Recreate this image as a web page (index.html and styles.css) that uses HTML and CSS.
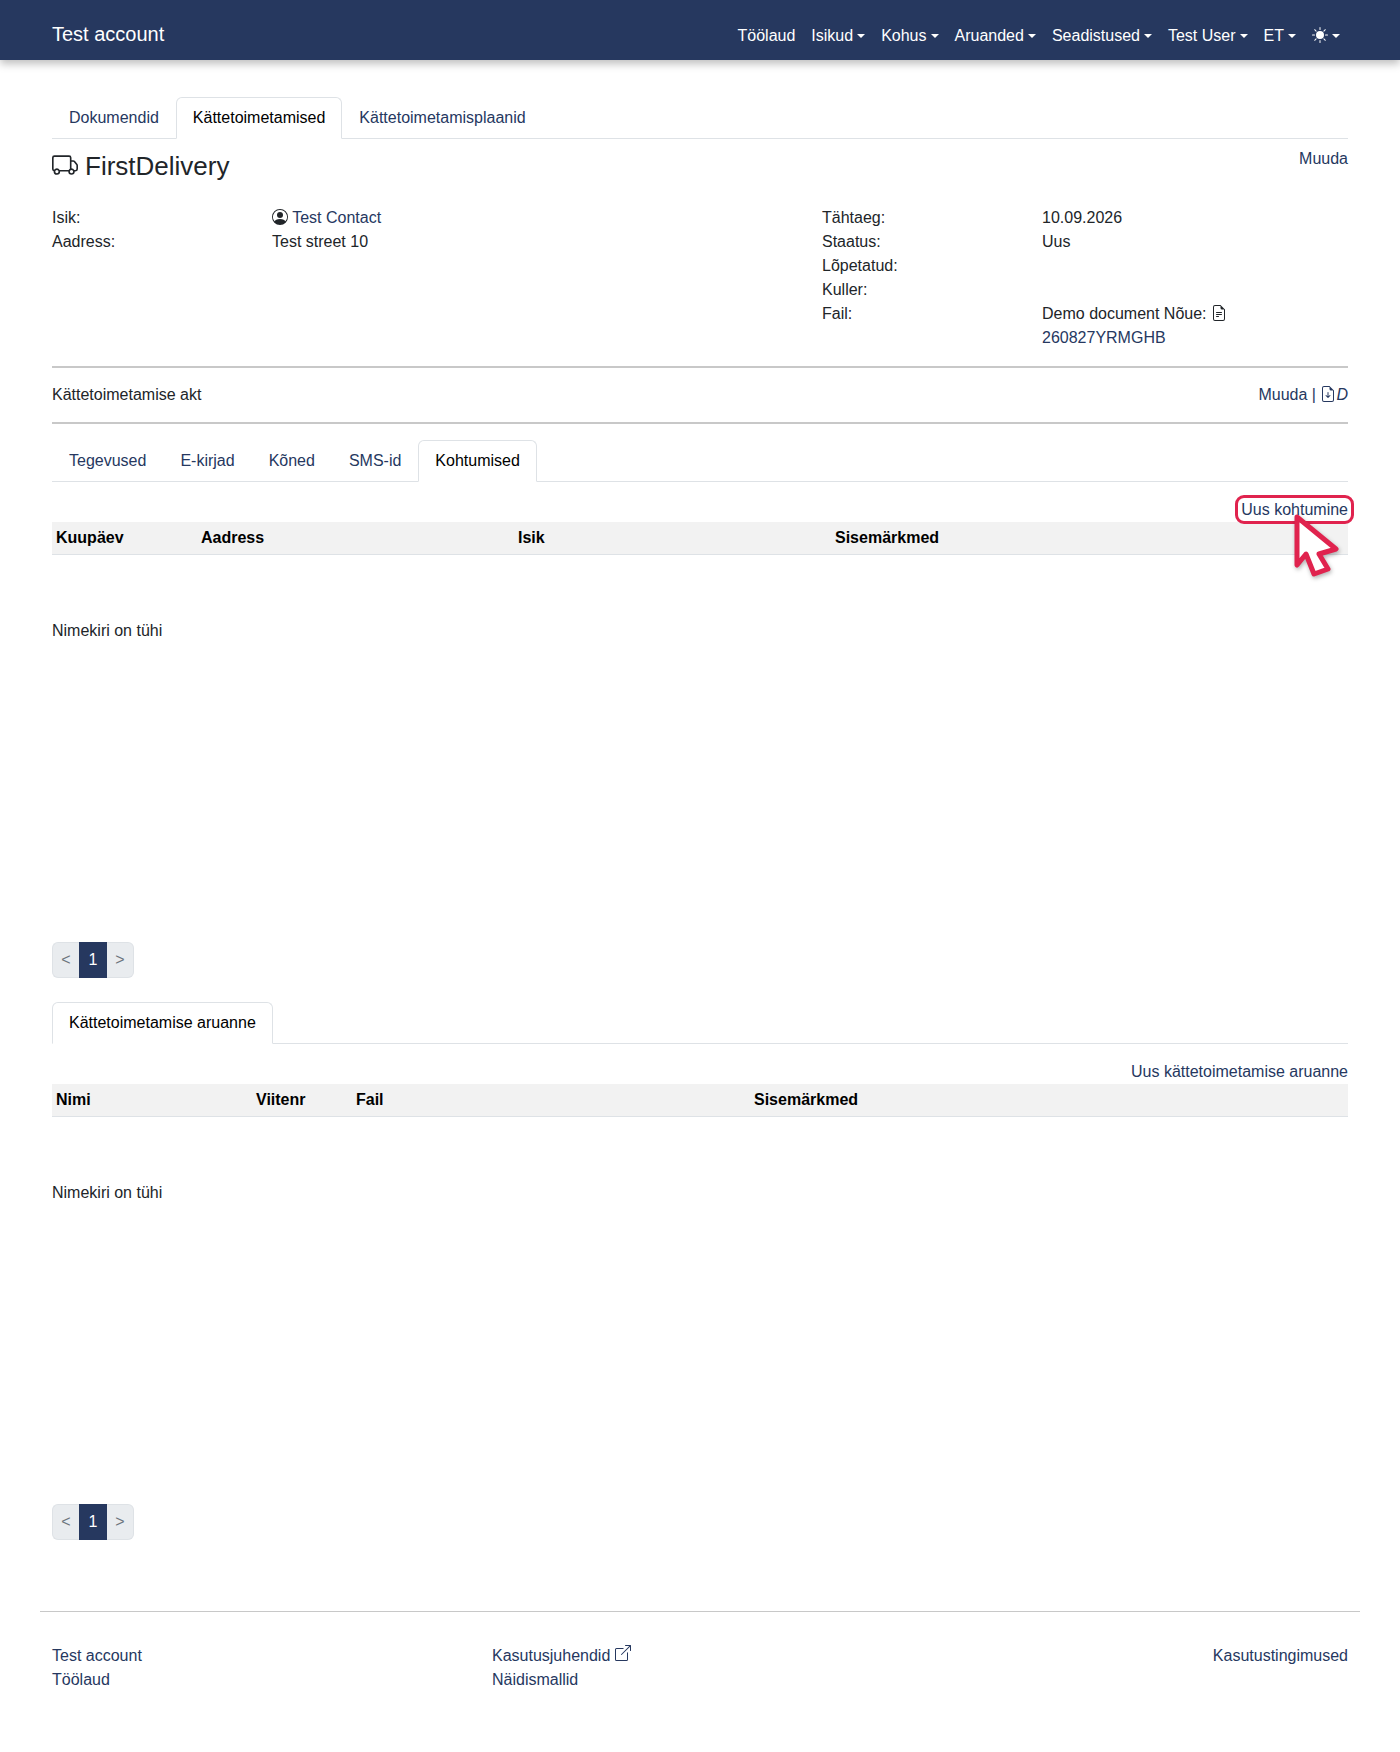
FILE: index.html
```html
<!DOCTYPE html>
<html lang="et">
<head>
    <meta charset="UTF-8">
    <title>FirstDelivery</title>
    <link rel="stylesheet" href="styles.css">
</head>
<body>
    <svg class="defs" width="0" height="0">
        <symbol id="i-truck" viewBox="0 0 16 16"><path d="M0 3.5A1.5 1.5 0 0 1 1.5 2h9A1.5 1.5 0 0 1 12 3.5V5h1.02a1.5 1.5 0 0 1 1.17.563l1.481 1.85a1.5 1.5 0 0 1 .329.938V10.5a1.5 1.5 0 0 1-1.5 1.5H14a2 2 0 1 1-4 0H5a2 2 0 1 1-3.998-.085A1.5 1.5 0 0 1 0 10.5zm1.294 7.456A2 2 0 0 1 4.732 11h5.536a2 2 0 0 1 .732-.732V3.5a.5.5 0 0 0-.5-.5h-9a.5.5 0 0 0-.5.5v7a.5.5 0 0 0 .294.456M12 10a2 2 0 0 1 1.732 1h.768a.5.5 0 0 0 .5-.5V8.35a.5.5 0 0 0-.11-.312l-1.48-1.85A.5.5 0 0 0 13.02 6H12zm-9 1a1 1 0 1 0 0 2 1 1 0 0 0 0-2m9 0a1 1 0 1 0 0 2 1 1 0 0 0 0-2"/></symbol>
        <symbol id="i-person" viewBox="0 0 16 16"><path d="M11 6a3 3 0 1 1-6 0 3 3 0 0 1 6 0"/><path fill-rule="evenodd" d="M0 8a8 8 0 1 1 16 0A8 8 0 0 1 0 8m8-7a7 7 0 0 0-5.468 11.37C3.242 11.226 4.805 10 8 10s4.757 1.225 5.468 2.37A7 7 0 0 0 8 1"/></symbol>
        <symbol id="i-file" viewBox="0 0 16 16"><path d="M5.5 7a.5.5 0 0 0 0 1h5a.5.5 0 0 0 0-1zM5 9.5a.5.5 0 0 1 .5-.5h5a.5.5 0 0 1 0 1h-5a.5.5 0 0 1-.5-.5m0 2a.5.5 0 0 1 .5-.5h2a.5.5 0 0 1 0 1h-2a.5.5 0 0 1-.5-.5"/><path d="M9.5 0H4a2 2 0 0 0-2 2v12a2 2 0 0 0 2 2h8a2 2 0 0 0 2-2V4.5zm0 1v2A1.5 1.5 0 0 0 11 4.5h2V14a1 1 0 0 1-1 1H4a1 1 0 0 1-1-1V2a1 1 0 0 1 1-1z"/></symbol>
        <symbol id="i-file-down" viewBox="0 0 16 16"><path d="M8.5 6.5a.5.5 0 0 0-1 0v3.793L6.354 9.146a.5.5 0 1 0-.708.708l2 2a.5.5 0 0 0 .708 0l2-2a.5.5 0 0 0-.708-.708L8.5 10.293z"/><path d="M14 14V4.5L9.5 0H4a2 2 0 0 0-2 2v12a2 2 0 0 0 2 2h8a2 2 0 0 0 2-2M9.5 3A1.5 1.5 0 0 0 11 4.5h2V14a1 1 0 0 1-1 1H4a1 1 0 0 1-1-1V2a1 1 0 0 1 1-1h5.5z"/></symbol>
        <symbol id="i-external" viewBox="0 0 16 16"><path fill-rule="evenodd" d="M8.636 3.5a.5.5 0 0 0-.5-.5H1.5A1.5 1.5 0 0 0 0 4.5v10A1.5 1.5 0 0 0 1.5 16h10a1.5 1.5 0 0 0 1.5-1.5V7.864a.5.5 0 0 0-1 0V14.5a.5.5 0 0 1-.5.5h-10a.5.5 0 0 1-.5-.5v-10a.5.5 0 0 1 .5-.5h6.636a.5.5 0 0 0 .5-.5"/><path fill-rule="evenodd" d="M16 .5a.5.5 0 0 0-.5-.5h-5a.5.5 0 0 0 0 1h3.793L6.146 9.146a.5.5 0 1 0 .708.708L15 1.707V5.5a.5.5 0 0 0 1 0z"/></symbol>
        <symbol id="i-sun" viewBox="0 0 16 16"><path d="M8 12a4 4 0 1 0 0-8 4 4 0 0 0 0 8M8 0a.5.5 0 0 1 .5.5v2a.5.5 0 0 1-1 0v-2A.5.5 0 0 1 8 0m0 13a.5.5 0 0 1 .5.5v2a.5.5 0 0 1-1 0v-2A.5.5 0 0 1 8 13m8-5a.5.5 0 0 1-.5.5h-2a.5.5 0 0 1 0-1h2a.5.5 0 0 1 .5.5M3 8a.5.5 0 0 1-.5.5h-2a.5.5 0 0 1 0-1h2A.5.5 0 0 1 3 8m10.657-5.657a.5.5 0 0 1 0 .707l-1.414 1.415a.5.5 0 1 1-.707-.708l1.414-1.414a.5.5 0 0 1 .707 0m-9.193 9.193a.5.5 0 0 1 0 .707L3.05 13.657a.5.5 0 0 1-.707-.707l1.414-1.414a.5.5 0 0 1 .707 0m9.193 2.121a.5.5 0 0 1-.707 0l-1.414-1.414a.5.5 0 0 1 .707-.707l1.414 1.414a.5.5 0 0 1 0 .707M4.464 4.465a.5.5 0 0 1-.707 0L2.343 3.05a.5.5 0 1 1 .707-.707l1.414 1.414a.5.5 0 0 1 0 .708"/></symbol>
    </svg>

    <nav class="navbar">
        <a class="brand" href="#">Test account</a>
        <div class="menu">
            <a href="#">Töölaud</a>
            <a class="caret" href="#">Isikud</a>
            <a class="caret" href="#">Kohus</a>
            <a class="caret" href="#">Aruanded</a>
            <a class="caret" href="#">Seadistused</a>
            <a class="caret" href="#">Test User</a>
            <a class="caret" href="#">ET</a>
            <a class="caret" href="#"><svg class="icon sun"><use href="#i-sun"/></svg></a>
        </div>
    </nav>

    <main class="content">
        <div class="tabs">
            <a href="#">Dokumendid</a>
            <a class="active" href="#">Kättetoimetamised</a>
            <a href="#">Kättetoimetamisplaanid</a>
        </div>

        <div class="title-row">
            <h3><svg class="icon truck"><use href="#i-truck"/></svg>FirstDelivery</h3>
            <a href="#">Muuda</a>
        </div>

        <div class="details">
            <div class="details-col">
                <div class="each"><span class="label">Isik:</span><span><svg class="icon person"><use href="#i-person"/></svg> <a href="#">Test Contact</a></span></div>
                <div class="each"><span class="label">Aadress:</span><span>Test street 10</span></div>
            </div>
            <div class="details-col">
                <div class="each"><span class="label">Tähtaeg:</span><span>10.09.2026</span></div>
                <div class="each"><span class="label">Staatus:</span><span>Uus</span></div>
                <div class="each"><span class="label">Lõpetatud:</span></div>
                <div class="each"><span class="label">Kuller:</span></div>
                <div class="each"><span class="label">Fail:</span><span>Demo document Nõue: <svg class="icon small"><use href="#i-file"/></svg><a class="block" href="#">260827YRMGHB</a></span></div>
            </div>
        </div>

        <div class="act">
            <span>Kättetoimetamise akt</span>
            <span class="act-links"><a href="#">Muuda</a> | <a href="#"><svg class="icon small"><use href="#i-file-down"/></svg><i>D</i></a></span>
        </div>

        <div class="tabs">
            <a href="#">Tegevused</a>
            <a href="#">E-kirjad</a>
            <a href="#">Kõned</a>
            <a href="#">SMS-id</a>
            <a class="active" href="#">Kohtumised</a>
        </div>

        <div class="actions">
            <a class="highlighted" href="#">Uus kohtumine
                <svg class="cursor" width="48" height="66" viewBox="-4 -4 48 66"><polygon points="0,0 39,32 22,37 31,52 17,57 9,37 0,48"/></svg>
            </a>
        </div>
        <table class="list meetings">
            <thead>
                <tr><th>Kuupäev</th><th>Aadress</th><th>Isik</th><th>Sisemärkmed</th></tr>
            </thead>
        </table>
        <p class="empty">Nimekiri on tühi</p>
        <div class="pager"><a href="#">&lt;</a><a class="current" href="#">1</a><a href="#">&gt;</a></div>

        <div class="tabs report-tabs">
            <a class="active" href="#">Kättetoimetamise aruanne</a>
        </div>

        <div class="actions">
            <a href="#">Uus kättetoimetamise aruanne</a>
        </div>
        <table class="list reports">
            <thead>
                <tr><th>Nimi</th><th>Viitenr</th><th>Fail</th><th>Sisemärkmed</th></tr>
            </thead>
        </table>
        <p class="empty">Nimekiri on tühi</p>
        <div class="pager"><a href="#">&lt;</a><a class="current" href="#">1</a><a href="#">&gt;</a></div>
    </main>

    <footer class="footer">
        <div class="footer-col first">
            <a href="#">Test account</a>
            <a href="#">Töölaud</a>
        </div>
        <div class="footer-col second">
            <a href="#">Kasutusjuhendid <svg class="icon external"><use href="#i-external"/></svg></a>
            <a href="#">Näidismallid</a>
        </div>
        <div class="footer-col third">
            <a href="#">Kasutustingimused</a>
        </div>
    </footer>
</body>
</html>
```

FILE: styles.css
```css
body{
    margin: 0px;
    font-family: "Liberation Sans", Arial, sans-serif;
    font-size: 16px;
    line-height: 24px;
    color: #212529;
    background-color: #fff;
}
a{
    color: #26385f;
    text-decoration: none;
}
.defs{
    position: absolute;
}
.icon{
    display: inline-block;
    fill: currentColor;
    vertical-align: -2px;
}
.navbar{
    display: flex;
    justify-content: space-between;
    align-items: center;
    height: 60px;
    padding: 0px 52px;
    background-color: #26385f;
    box-shadow: 0 4px 8px rgba(0, 0, 0, 0.25);
}
.brand{
    color: #fff;
    font-size: 20px;
    margin-top: 7px;
}
.menu{
    display: flex;
    margin-top: 12px;
}
.menu a{
    color: #fff;
    padding: 0px 8px;
}
.caret::after{
    content: "";
    display: inline-block;
    margin-left: 4px;
    vertical-align: 3px;
    border-top: 4.8px solid;
    border-left: 4.8px solid transparent;
    border-right: 4.8px solid transparent;
}
.sun{
    width: 16px;
    height: 16px;
}
.content{
    padding: 37px 52px 0px;
}
.tabs{
    display: flex;
    border-bottom: 1px solid #dee2e6;
}
.tabs a{
    padding: 8px 16px;
    border: 1px solid transparent;
    border-radius: 6px 6px 0 0;
    margin-bottom: -1px;
}
.tabs a.active{
    color: #000;
    background-color: #fff;
    border-color: #dee2e6 #dee2e6 #fff;
}
.title-row{
    display: flex;
    justify-content: space-between;
    align-items: flex-start;
    height: 59px;
    padding-top: 8px;
}
h3{
    margin: 0px;
    font-size: 26px;
    font-weight: 400;
    line-height: 38px;
}
.truck{
    width: 26px;
    height: 26px;
    margin-right: 7px;
    vertical-align: -3px;
}
.details{
    display: flex;
    padding-bottom: 16px;
    border-bottom: 2px solid #c8c8c8;
}
.details-col{
    flex-basis: 770px;
}
.details-col + .details-col{
    flex: 1;
}
.each{
    display: flex;
}
.label{
    flex-basis: 220px;
    flex-shrink: 0;
}
.person{
    width: 16px;
    height: 16px;
}
.small{
    width: 16px;
    height: 16px;
}
.block{
    display: block;
}
.act{
    display: flex;
    justify-content: space-between;
    align-items: center;
    height: 54px;
    border-bottom: 2px solid #c8c8c8;
    margin-bottom: 16px;
}
.act-links{
    color: #26385f;
}
.actions{
    display: flex;
    justify-content: flex-end;
    padding-top: 16px;
    height: 24px;
}
.highlighted{
    position: relative;
}
.highlighted::before{
    content: "";
    position: absolute;
    left: -6px;
    right: -6px;
    top: -3px;
    bottom: -2px;
    border: 3px solid #e0234e;
    border-radius: 9px;
}
.cursor{
    position: absolute;
    left: 52px;
    top: 15px;
    z-index: 1;
    fill: #fff;
    stroke: #e0234e;
    stroke-width: 5;
    stroke-linejoin: round;
    filter: drop-shadow(1px 2px 2px rgba(0, 0, 0, 0.3));
}
.list{
    width: 100%;
    border-collapse: collapse;
    table-layout: fixed;
}
.list th{
    color: #000;
    text-align: left;
    padding: 4px;
    background-color: #f2f2f2;
    border-bottom: 1px solid #dee2e6;
}
.meetings th:nth-child(1){ width: 137px; }
.meetings th:nth-child(2){ width: 309px; }
.meetings th:nth-child(3){ width: 309px; }
.reports th:nth-child(1){ width: 192px; }
.reports th:nth-child(2){ width: 92px; }
.reports th:nth-child(3){ width: 390px; }
.empty{
    margin: 0px;
    padding-top: 64px;
    height: 323px;
}
.pager{
    display: flex;
    width: fit-content;
    height: 36px;
    line-height: 34px;
}
.pager a{
    color: #6c757d;
    width: 27px;
    text-align: center;
    box-sizing: border-box;
    background-color: #e9ecef;
    border: 1px solid #dee2e6;
}
.pager a:first-child{
    border-right: 0px;
    border-radius: 6px 0 0 6px;
}
.pager a:last-child{
    border-left: 0px;
    border-radius: 0 6px 6px 0;
}
.pager a.current{
    width: 28px;
    color: #fff;
    background-color: #26385f;
    border-color: #26385f;
}
.report-tabs{
    margin-top: 24px;
}
.footer{
    display: flex;
    margin: 71px 40px 0px;
    padding: 32px 12px 0px;
    border-top: 1px solid #c8c8c8;
    height: 112px;
    box-sizing: border-box;
}
.footer-col{
    display: flex;
    flex-direction: column;
}
.first{
    flex-basis: 440px;
}
.second{
    flex: 1;
}
.external{
    width: 16px;
    height: 16px;
    vertical-align: 0px;
}
```
